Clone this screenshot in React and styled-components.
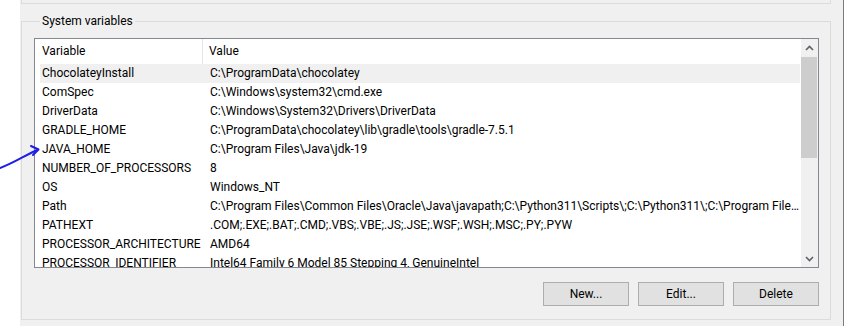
import React from 'react';
import styled, { createGlobalStyle } from 'styled-components';

const GlobalStyle = createGlobalStyle`
  html, body {
    margin: 0;
    background: #ffffff;
  }
  body {
    font-family: Roboto, "Liberation Sans", Arial, sans-serif;
    font-size: 12px;
    color: #000;
  }
`;

const Page = styled.div`
  position: relative;
  width: 863px;
  height: 326px;
  overflow: hidden;
  padding-left: 20px;
  box-sizing: border-box;
`;

const Dialog = styled.div`
  width: 824px;
  height: 326px;
  box-sizing: border-box;
  background: #f0f0f0;
  border-right: 1px solid #7a7a7a;
  padding-left: 1px;
`;

const TopGroup = styled.div`
  width: 810px;
  height: 4px;
  box-sizing: border-box;
  border: 1px solid #dcdcdc;
  border-top: none;
`;

const Group = styled.fieldset`
  margin: 9px 0 0 0;
  width: 810px;
  height: 307px;
  box-sizing: border-box;
  border: 1px solid #dcdcdc;
  padding: 9px 11px 0 12px;
`;

const Legend = styled.legend`
  margin-left: 6px;
  padding: 0 2px;
  line-height: 16px;
  font-size: 12px;
`;

const List = styled.div`
  width: 785px;
  height: 230px;
  box-sizing: border-box;
  border: 1px solid #828790;
  background: #fff;
  display: grid;
  grid-template-columns: 766px 17px;
  overflow: hidden;
`;

const ListBody = styled.div`
  overflow: hidden;
`;

const Header = styled.div`
  display: flex;
  height: 25px;
  background: #fff;
`;

const HeadCell = styled.div`
  width: ${(p) => p.$w || 'auto'};
  flex: ${(p) => (p.$w ? 'none' : '1')};
  box-sizing: border-box;
  padding-left: ${(p) => p.$pad}px;
  line-height: 24px;
  border-right: ${(p) => (p.$divider ? '1px solid #e5e5e5' : 'none')};
  white-space: nowrap;
`;

const Row = styled.div`
  display: flex;
  height: 19px;
  margin: 0 1px 0 5px;
  background: ${(p) => (p.$selected ? '#f0f0f0' : 'transparent')};
`;

const Cell = styled.div`
  width: ${(p) => p.$w || 'auto'};
  flex: ${(p) => (p.$w ? 'none' : '1')};
  min-width: 0;
  box-sizing: border-box;
  padding-left: ${(p) => p.$pad}px;
  line-height: 19px;
  white-space: nowrap;
  overflow: hidden;
  text-overflow: ellipsis;
`;

const Scrollbar = styled.div`
  display: flex;
  flex-direction: column;
  background: #f0f0f0;
`;

const ArrowButton = styled.div`
  height: 17px;
  display: flex;
  align-items: center;
  justify-content: center;
  flex: none;
`;

const Thumb = styled.div`
  height: 101px;
  margin: 1px 1px 0 0;
  background: #cdcdcd;
`;

const Track = styled.div`
  flex: 1;
`;

const Buttons = styled.div`
  display: flex;
  justify-content: flex-end;
  gap: 9px;
  margin-top: 14px;
`;

const Button = styled.button`
  width: 86px;
  height: 24px;
  box-sizing: border-box;
  background: #e1e1e1;
  border: 1px solid #adadad;
  font-family: Roboto, "Liberation Sans", Arial, sans-serif;
  font-size: 12px;
  color: #000;
  padding: 0;
`;

const Annotation = styled.svg`
  position: absolute;
  left: 0;
  top: 140px;
`;

const rows = [
  ['ChocolateyInstall', 'C:\\ProgramData\\chocolatey'],
  ['ComSpec', 'C:\\Windows\\system32\\cmd.exe'],
  ['DriverData', 'C:\\Windows\\System32\\Drivers\\DriverData'],
  ['GRADLE_HOME', 'C:\\ProgramData\\chocolatey\\lib\\gradle\\tools\\gradle-7.5.1'],
  ['JAVA_HOME', 'C:\\Program Files\\Java\\jdk-19'],
  ['NUMBER_OF_PROCESSORS', '8'],
  ['OS', 'Windows_NT'],
  ['Path', 'C:\\Program Files\\Common Files\\Oracle\\Java\\javapath;C:\\Python311\\Scripts\\;C:\\Python311\\;C:\\Program File...'],
  ['PATHEXT', '.COM;.EXE;.BAT;.CMD;.VBS;.VBE;.JS;.JSE;.WSF;.WSH;.MSC;.PY;.PYW'],
  ['PROCESSOR_ARCHITECTURE', 'AMD64'],
  ['PROCESSOR_IDENTIFIER', 'Intel64 Family 6 Model 85 Stepping 4, GenuineIntel'],
];

const Chevron = ({ down }) => (
  <svg width="9" height="6" viewBox="0 0 9 6">
    <path
      d={down ? 'M1 1 L4.5 4.5 L8 1' : 'M1 5 L4.5 1.5 L8 5'}
      fill="none"
      stroke="#606060"
      strokeWidth="1.6"
    />
  </svg>
);

const App = () => (
  <Page>
    <GlobalStyle />
    <Dialog>
      <TopGroup />
      <Group>
        <Legend>System variables</Legend>
        <List>
          <ListBody>
            <Header>
              <HeadCell $w="168px" $pad={7} $divider>Variable</HeadCell>
              <HeadCell $pad={6}>Value</HeadCell>
            </Header>
            {rows.map(([name, value], i) => (
              <Row key={name} $selected={i === 0}>
                <Cell $w="163px" $pad={2}>{name}</Cell>
                <Cell $pad={7}>{value}</Cell>
              </Row>
            ))}
          </ListBody>
          <Scrollbar>
            <ArrowButton><Chevron /></ArrowButton>
            <Thumb />
            <Track />
            <ArrowButton><Chevron down /></ArrowButton>
          </Scrollbar>
        </List>
        <Buttons>
          <Button>New...</Button>
          <Button>Edit...</Button>
          <Button>Delete</Button>
        </Buttons>
      </Group>
    </Dialog>
    <Annotation width="45" height="35" viewBox="0 0 45 35">
      <path
        d="M0 28 C12 24 24 16 38 9.5"
        fill="none"
        stroke="#1f1fe6"
        strokeWidth="2"
        strokeLinecap="round"
      />
      <path
        d="M31 6 L38.5 9.5 L33 15"
        fill="none"
        stroke="#1f1fe6"
        strokeWidth="2"
        strokeLinecap="round"
        strokeLinejoin="round"
      />
    </Annotation>
  </Page>
);

export default App;
